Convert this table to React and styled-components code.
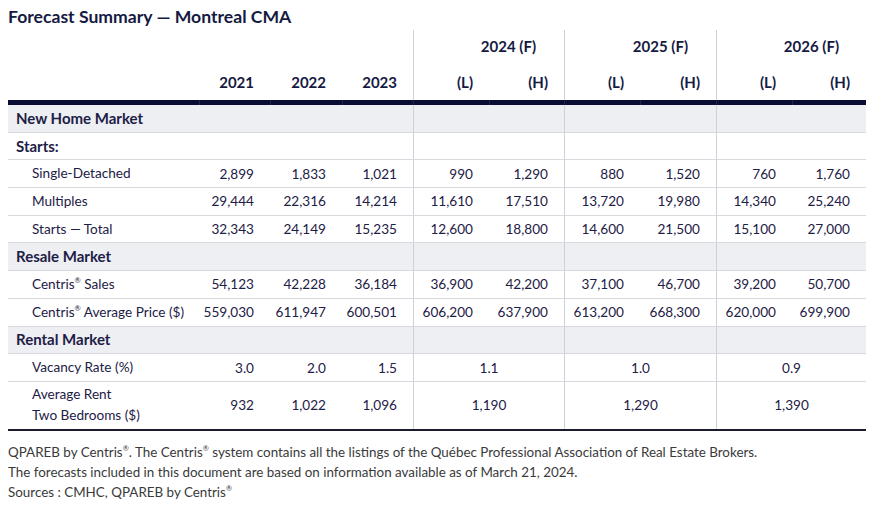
import React from "react";
import styled, { createGlobalStyle } from "styled-components";

const GlobalStyle = createGlobalStyle`
  html, body { margin: 0; padding: 0; background: #ffffff; }
  body { font-family: Lato, "Open Sans", "Liberation Sans", sans-serif; }
`;

const COLS = "191px 71px 72px 71px 76px 75px 76px 76px 76px 74px";

const Page = styled.div`
  width: 880px;
  padding: 0 8px;
  box-sizing: border-box;
  color: #1d2045;
`;

const Title = styled.h1`
  margin: 0;
  padding-top: 6px;
  height: 24px;
  font-size: 17.6px;
  line-height: 22px;
  font-weight: 700;
  color: #151a42;
`;

const Table = styled.div`
  width: 858px;
`;

const Row = styled.div`
  display: grid;
  grid-template-columns: ${COLS};
  height: ${(p) => p.$h || "27.7px"};
  box-sizing: border-box;
  background: ${(p) => (p.$shade ? "#eeeff2" : "transparent")};
  border-bottom: ${(p) => (p.$line ? "1px solid #d8d9df" : "none")};
`;

const HeadCell = styled.div`
  grid-column: span ${(p) => p.$span || 1};
  display: flex;
  align-items: ${(p) => p.$align || "flex-end"};
  justify-content: flex-end;
  padding: 0 ${(p) => p.$pr || 16}px ${(p) => p.$pb || 0}px 0;
  border-left: ${(p) => (p.$group ? "1px solid #cfd0d8" : "none")};
  font-size: 15px;
  font-weight: 700;
  color: #151a42;
  white-space: nowrap;
`;

const Bar = styled.div`
  display: grid;
  grid-template-columns: ${COLS};
  height: 5px;
  background: #0b0c36;
`;

const BarTick = styled.div`
  border-left: ${(p) => (p.$first ? "none" : "1px solid #23264c")};
`;

const LabelCell = styled.div`
  display: flex;
  align-items: center;
  padding-left: ${(p) => (p.$indent ? 24 : 8)}px;
  font-size: ${(p) => (p.$bold ? 15 : 13.6)}px;
  font-weight: ${(p) => (p.$bold ? 700 : 400)};
  line-height: 21px;
  color: #1d2045;
  white-space: nowrap;
`;

const Cell = styled.div`
  grid-column: span ${(p) => p.$span || 1};
  display: flex;
  align-items: center;
  justify-content: ${(p) => (p.$center ? "center" : "flex-end")};
  padding-right: ${(p) => (p.$center ? 0 : 16)}px;
  border-left: ${(p) => (p.$group ? "1px solid #cfd0d8" : "none")};
  font-size: 13.6px;
  color: #1d2045;
  white-space: nowrap;
`;

const Sup = styled.sup`
  font-size: 0.55em;
  vertical-align: 0.75em;
  line-height: 0;
`;

const BottomRule = styled.div`
  height: 2px;
  background: #1a1b2e;
`;

const Notes = styled.div`
  margin-top: 11px;
  font-size: 13.4px;
  line-height: 20px;
  color: #3a3a3a;
`;

const Note = styled.p`
  margin: 0;
`;

const Centris = () => (
  <>
    Centris<Sup>®</Sup>
  </>
);

const rows = [
  { kind: "section", label: "New Home Market" },
  { kind: "sub", label: "Starts:" },
  { label: "Single-Detached", values: ["2,899", "1,833", "1,021", "990", "1,290", "880", "1,520", "760", "1,760"] },
  { label: "Multiples", values: ["29,444", "22,316", "14,214", "11,610", "17,510", "13,720", "19,980", "14,340", "25,240"] },
  { label: "Starts — Total", values: ["32,343", "24,149", "15,235", "12,600", "18,800", "14,600", "21,500", "15,100", "27,000"] },
  { kind: "section", label: "Resale Market" },
  { label: <><Centris />{" "}Sales</>, values: ["54,123", "42,228", "36,184", "36,900", "42,200", "37,100", "46,700", "39,200", "50,700"] },
  { label: <><Centris />{" "}Average Price ($)</>, values: ["559,030", "611,947", "600,501", "606,200", "637,900", "613,200", "668,300", "620,000", "699,900"] },
  { kind: "section", label: "Rental Market" },
  { label: "Vacancy Rate (%)", values: ["3.0", "2.0", "1.5"], merged: ["1.1", "1.0", "0.9"] },
  {
    label: <>Average Rent<br />Two Bedrooms ($)</>,
    values: ["932", "1,022", "1,096"],
    merged: ["1,190", "1,290", "1,390"],
    tall: true,
    last: true,
  },
];

const groupStart = (i) => i === 3 || i === 5 || i === 7;

function BodyRow({ row }) {
  if (row.kind === "section" || row.kind === "sub") {
    return (
      <Row $line $shade={row.kind === "section"}>
        <LabelCell $bold><span>{row.label}</span></LabelCell>
        <Cell />
        <Cell />
        <Cell />
        <Cell $group $span={2} />
        <Cell $group $span={2} />
        <Cell $group $span={2} />
      </Row>
    );
  }
  return (
    <Row $line={!row.last} $h={row.tall ? "47px" : undefined}>
      <LabelCell $indent><span>{row.label}</span></LabelCell>
      {row.merged ? (
        <>
          {row.values.map((v, i) => (
            <Cell key={i}>{v}</Cell>
          ))}
          {row.merged.map((v, i) => (
            <Cell key={"m" + i} $group $span={2} $center>
              {v}
            </Cell>
          ))}
        </>
      ) : (
        row.values.map((v, i) => (
          <Cell key={i} $group={groupStart(i)}>
            {v}
          </Cell>
        ))
      )}
    </Row>
  );
}

export default function App() {
  return (
    <>
      <GlobalStyle />
      <Page>
        <Title>Forecast Summary — Montreal CMA</Title>
        <Table>
          <Row $h="30px">
            <HeadCell $span={4} />
            <HeadCell $span={2} $group $pr={28} $pb={5}>2024 (F)</HeadCell>
            <HeadCell $span={2} $group $pr={28} $pb={5}>2025 (F)</HeadCell>
            <HeadCell $span={2} $group $pr={27} $pb={5}>2026 (F)</HeadCell>
          </Row>
          <Row $h="40px">
            <HeadCell />
            <HeadCell $pb={9}>2021</HeadCell>
            <HeadCell $pb={9}>2022</HeadCell>
            <HeadCell $pb={9}>2023</HeadCell>
            <HeadCell $group $pb={9}>(L)</HeadCell>
            <HeadCell $pb={9}>(H)</HeadCell>
            <HeadCell $group $pb={9}>(L)</HeadCell>
            <HeadCell $pb={9}>(H)</HeadCell>
            <HeadCell $group $pb={9}>(L)</HeadCell>
            <HeadCell $pb={9}>(H)</HeadCell>
          </Row>
          <Bar>
            {Array.from({ length: 10 }).map((_, i) => (
              <BarTick key={i} $first={i === 0} />
            ))}
          </Bar>
          {rows.map((r, i) => (
            <BodyRow key={i} row={r} />
          ))}
          <BottomRule />
        </Table>
        <Notes>
          <Note>
            QPAREB by <Centris />. The <Centris /> system contains all the listings of the Québec Professional
            Association of Real Estate Brokers.
          </Note>
          <Note>The forecasts included in this document are based on information available as of March 21, 2024.</Note>
          <Note>
            Sources : CMHC, QPAREB by <Centris />
          </Note>
        </Notes>
      </Page>
    </>
  );
}
